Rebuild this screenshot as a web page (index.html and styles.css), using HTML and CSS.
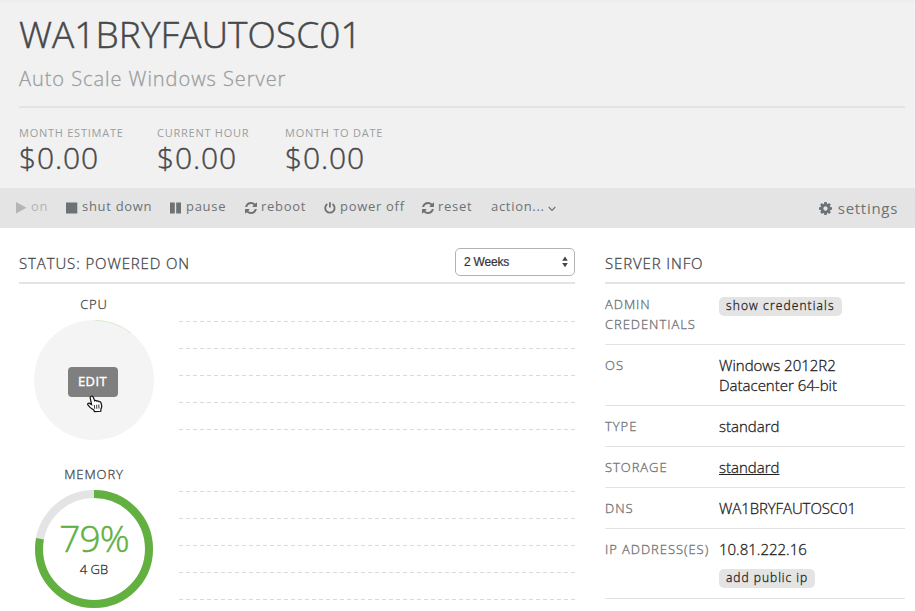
FILE: index.html
```html
<!DOCTYPE html>
<html lang="en">
<head>
<meta charset="utf-8">
<title>WA1BRYFAUTOSC01</title>
<link rel="stylesheet" href="styles.css">
</head>
<body>
<svg class="defs" width="0" height="0">
  <symbol id="refresh" viewBox="0 0 1536 1536">
    <path d="M1511 928q0 5-1 7-64 268-268 434.500T764 1536q-146 0-282.500-55T238 1324l-129 129q-19 19-45 19t-45-19-19-45V960q0-26 19-45t45-19h448q26 0 45 19t19 45-19 45l-137 137q71 66 161 102t187 36q134 0 250-65t186-179q11-17 53-117 8-23 30-23h192q13 0 22.500 9.500t9.500 22.500zm25-800v448q0 26-19 45t-45 19h-448q-26 0-45-19t-19-45 19-45l138-138Q969 256 768 256q-134 0-250 65T332 500q-11 17-53 117-8 23-30 23H50q-13 0-22.500-9.500T18 608v-7q65-268 270-434.500T768 0q146 0 284 55.500T1297 212l130-129q19-19 45-19t45 19 19 45z"/>
  </symbol>
</svg>
<header class="head">
  <h1>WA1BRYFAUTOSC01</h1>
  <p class="sub">Auto Scale Windows Server</p>
  <dl class="costs">
    <div class="cost c1"><dt>MONTH ESTIMATE</dt><dd>$0.00</dd></div>
    <div class="cost c2"><dt>CURRENT HOUR</dt><dd>$0.00</dd></div>
    <div class="cost c3"><dt>MONTH TO DATE</dt><dd>$0.00</dd></div>
  </dl>
</header>
<nav class="bar">
  <a class="act on off"><svg width="11" height="12" viewBox="0 0 11 12"><path d="M0 0l10.500 5.700L0 11.400z"/></svg><span>on</span></a>
  <a class="act shut"><svg width="12" height="12" viewBox="0 0 12 12"><path d="M0 .5h11.300v11H0z"/></svg><span>shut down</span></a>
  <a class="act pause"><svg width="12" height="12" viewBox="0 0 12 12"><path d="M0 .5h4.800v11H0zM6.200.5H11v11H6.200z"/></svg><span>pause</span></a>
  <a class="act reboot"><svg width="12" height="12"><use href="#refresh"/></svg><span>reboot</span></a>
  <a class="act power"><svg width="12" height="12" viewBox="0 0 12 12"><path class="line" d="M3.300 2.100A4.700 4.700 0 1 0 8.500 2.100M5.900.200v5.300"/></svg><span>power off</span></a>
  <a class="act reset"><svg width="12" height="12"><use href="#refresh"/></svg><span>reset</span></a>
  <a class="act more"><span>action...</span><svg width="8" height="6" viewBox="0 0 8 6"><path class="thin" d="M.7 1l3.300 3.300L7.300 1"/></svg></a>
  <a class="settings"><svg width="13" height="13" viewBox="0 0 1536 1536"><path d="M1024 768q0-106-75-181t-181-75-181 75-75 181 75 181 181 75 181-75 75-181zm512-109v222q0 12-8 23t-20 13l-185 28q-19 54-39 91 35 50 107 138 10 12 10 25t-9 23q-27 37-99 108t-94 71q-12 0-26-9l-138-108q-44 23-91 38-16 136-29 186-7 28-36 28H657q-14 0-24.500-8.500T621 1506l-28-184q-49-16-90-37l-141 107q-10 9-25 9-14 0-25-11-126-114-165-168-7-10-7-23 0-12 8-23 15-21 51-66.500t54-70.500q-27-50-41-99L29 913q-13-2-21-12.500T0 877V655q0-12 8-23t19-13l186-28q14-46 39-92-40-57-107-138-10-12-10-24 0-10 9-23 26-36 98.500-107.500T337 135q13 0 26 10l138 107q44-23 91-38 16-136 29-186 7-28 36-28h222q14 0 24.500 8.500T915 30l28 184q49 16 90 37l142-107q9-9 24-9 13 0 25 10 129 119 165 170 7 8 7 22 0 12-8 23-15 21-51 66.500t-54 70.500q26 50 41 98l183 28q13 2 21 12.500t8 23.500z"/></svg><span>settings</span></a>
</nav>
<main class="main">
  <section class="status">
    <div class="sec-head"><h2>STATUS: POWERED ON</h2>
      <div class="select"><span>2 Weeks</span><svg width="6" height="12" viewBox="0 0 6 12"><path d="M3 .5L5.800 4.700H.2zM3 11.200L.2 7h5.600z"/></svg></div>
    </div>
    <div class="metric">
      <div class="gauge">
        <h3>CPU</h3>
        <div class="disc"><svg class="ring" width="120" height="120" viewBox="0 0 120 120"><circle cx="60" cy="60" r="60" fill="#f4f4f4"/><path d="M61 .3A59.800 59.800 0 0 1 97 13" fill="none" stroke="#cfe6c4" stroke-width=".7"/></svg><button class="edit">EDIT</button>
          <svg class="cursor" width="16" height="18" viewBox="0 0 16 18"><path d="M4.200 1.200c.9-.4 1.700.1 2.100 1l1.500 3.700c.6-.7 1.800-.5 2.200.3.700-.5 1.600-.3 2 .5.800-.3 1.600 0 1.900.8l.8 3.100c.3 1.600-.5 2.400-.8 3.500l-.1 2.200-6.300.3-.8-1.700L3 12.400.9 9.900c-.7-1 .5-2.100 1.700-1.500l2 1.200L3.200 3c-.2-.8.200-1.500 1-1.800z" fill="#fff" stroke="#111" stroke-width="1.200"/><path d="M7.300 10l.4 3.800M9.600 9.800l.3 4M11.800 9.500l.2 4" stroke="#222" stroke-width=".9"/></svg></div>
      </div>
      <div class="grid"><i></i><i></i><i></i><i></i><i></i></div>
    </div>
    <div class="metric">
      <div class="gauge">
        <h3>MEMORY</h3>
        <div class="disc"><svg class="ring" width="120" height="120" viewBox="0 0 120 120"><circle cx="60" cy="59" r="55" fill="none" stroke="#e4e4e4" stroke-width="8"/><circle cx="60" cy="59" r="55" pathLength="100" stroke-dasharray="78 22" transform="rotate(-90 60 59)" fill="none" stroke="#62b03f" stroke-width="8"/></svg>
          <div class="reading"><strong>79%</strong><span>4 GB</span></div></div>
      </div>
      <div class="grid"><i></i><i></i><i></i><i></i><i></i></div>
    </div>
  </section>
  <section class="info">
    <div class="sec-head"><h2>SERVER INFO</h2></div>
    <dl>
      <div class="row"><dt>ADMIN CREDENTIALS</dt><dd><a class="pill show">show credentials</a></dd></div>
      <div class="row"><dt>OS</dt><dd>Windows 2012R2<br>Datacenter 64-bit</dd></div>
      <div class="row"><dt>TYPE</dt><dd>standard</dd></div>
      <div class="row"><dt>STORAGE</dt><dd><u>standard</u></dd></div>
      <div class="row"><dt>DNS</dt><dd class="host">WA1BRYFAUTOSC01</dd></div>
      <div class="row ips"><dt>IP ADDRESS(ES)</dt><dd>10.81.222.16<a class="pill add">add public ip</a></dd></div>
    </dl>
  </section>
</main>
</body>
</html>
```
FILE: styles.css
```css
* { box-sizing: border-box; margin: 0; padding: 0; }
html, body { height: 611px; overflow: hidden; }
body { background: #fff; color: #46484a; font-family: "Open Sans", sans-serif; font-weight: 300; }
svg { display: block; flex: none; }
span, h1, h2, h3, dt, strong, a { white-space: nowrap; }
h1, h2, h3, .sub, .cost dd, .row, .reading { -webkit-text-stroke: .3px currentColor; }
.defs { position: absolute; }

.head { height: 188px; background: #f1f1f1; border-top: 2px solid #eee; padding: 8px 10px 0 19px; }
h1 { font-size: 37px; font-weight: 300; line-height: 50px; letter-spacing: .07px; margin-top: -1px; -webkit-text-stroke-width: .5px; }
.sub { font-size: 20px; line-height: 28px; letter-spacing: .95px; color: #9b9e9e; margin-top: 6px; padding-bottom: 13px; border-bottom: 2px solid #e4e4e4; }
.costs { display: flex; padding-top: 17px; }
.c1 { width: 138px; }
.c2 { width: 128px; }
.cost dt { font-size: 11px; font-weight: 400; line-height: 16px; letter-spacing: .75px; color: #9b9e9e; }
.cost dd { font-size: 30px; line-height: 36px; margin-top: -1px; letter-spacing: .9px; -webkit-text-stroke-width: .4px; }

.bar { height: 40px; background: #e4e4e4; color: #6d7276; display: flex; padding-left: 16px; padding-right: 17px; }
.bar svg { fill: #6d7276; }
.act { display: flex; font-size: 13px; font-weight: 400; line-height: 37px; letter-spacing: .7px; }
.act svg { margin: 14px 4px 0 0; }
.off { color: #b5b5b5; }
.off svg { fill: #b5b5b5; }
.on { width: 50px; }
.shut { width: 104px; }
.pause { width: 75px; }
.reboot { width: 79px; }
.power { width: 98px; }
.reset { width: 69px; }
.more svg { margin: 18px 0 0 3px; }
.line { fill: none; stroke: #6d7276; stroke-width: 1.800; }
.thin { fill: none; stroke: #6d7276; stroke-width: 1.200; }
.settings { display: flex; margin-left: auto; font-size: 15px; font-weight: 400; line-height: 41px; letter-spacing: .7px; }
.settings svg { margin: 14px 6px 0 0; }

.main { display: flex; padding-left: 19px; gap: 30px; }
.status { width: 556px; }
.info { width: 300px; }
.sec-head { height: 56px; border-bottom: 2px solid #e4e4e4; display: flex; justify-content: space-between; padding-top: 20px; }
h2 { font-size: 15px; font-weight: 300; line-height: 30px; letter-spacing: .88px; }
.select { width: 120px; height: 28px; border: 1px solid #b3b3b3; border-radius: 5px; display: flex; justify-content: space-between; align-items: center; padding: 0 6px 1px 8px; font: 12px "Liberation Sans", sans-serif; letter-spacing: -.2px; color: #333; -webkit-text-stroke: .2px #333; }
.select svg { fill: #444; }

.metric { display: flex; height: 170px; }
.gauge { width: 150px; padding-top: 10px; display: flex; flex-direction: column; align-items: center; }
h3 { font-size: 13px; font-weight: 300; line-height: 20px; letter-spacing: .9px; margin-bottom: 6px; }
.disc { position: relative; width: 120px; height: 120px; }
.ring { position: absolute; left: 0; top: 0; }
.edit { position: absolute; left: 34px; top: 47px; width: 50px; height: 30px; border: 0; border-radius: 4px; background: #7f7f7f; color: #fff; font: 400 13px/26px "Open Sans", sans-serif; letter-spacing: .4px; padding-bottom: 2px; padding-right: 1px; -webkit-text-stroke: .4px #fff; }
.cursor { position: absolute; left: 53px; top: 75px; }
.reading { position: absolute; inset: 0; display: flex; flex-direction: column; align-items: center; color: #333; }
.reading strong { font-size: 37px; font-weight: 300; line-height: 46px; color: #62b03f; margin-top: 25px; letter-spacing: -.8px; -webkit-text-stroke: .5px #62b03f; }
.reading span { font-size: 13px; line-height: 16px; }
.grid { flex: 1; margin-left: 10px; padding-top: 37px; display: flex; flex-direction: column; gap: 26px; }
.grid i { height: 1px; background: repeating-linear-gradient(90deg, #d9d9d9 0 4px, transparent 4px 7px); }

.row { display: flex; padding: 10px 0; border-bottom: 1px solid #e2e2e2; line-height: 20px; }
.row dt { width: 114px; padding-right: 4px; font-size: 13px; letter-spacing: .95px; color: #6d7074; white-space: normal; }
.ips dt { white-space: nowrap; }
.row dd { flex: 1; font-size: 15px; color: #222; }
.row .host { letter-spacing: -.1px; }
.pill { display: block; width: 123px; height: 19px; margin-top: 3px; padding-left: 7px; border-radius: 5px; background: #e4e4e4; font-size: 12px; line-height: 17px; letter-spacing: 1.12px; color: #222; }
.add { width: 96px; margin-top: 10px; letter-spacing: 1px; }
.ips { height: 70px; }
```
